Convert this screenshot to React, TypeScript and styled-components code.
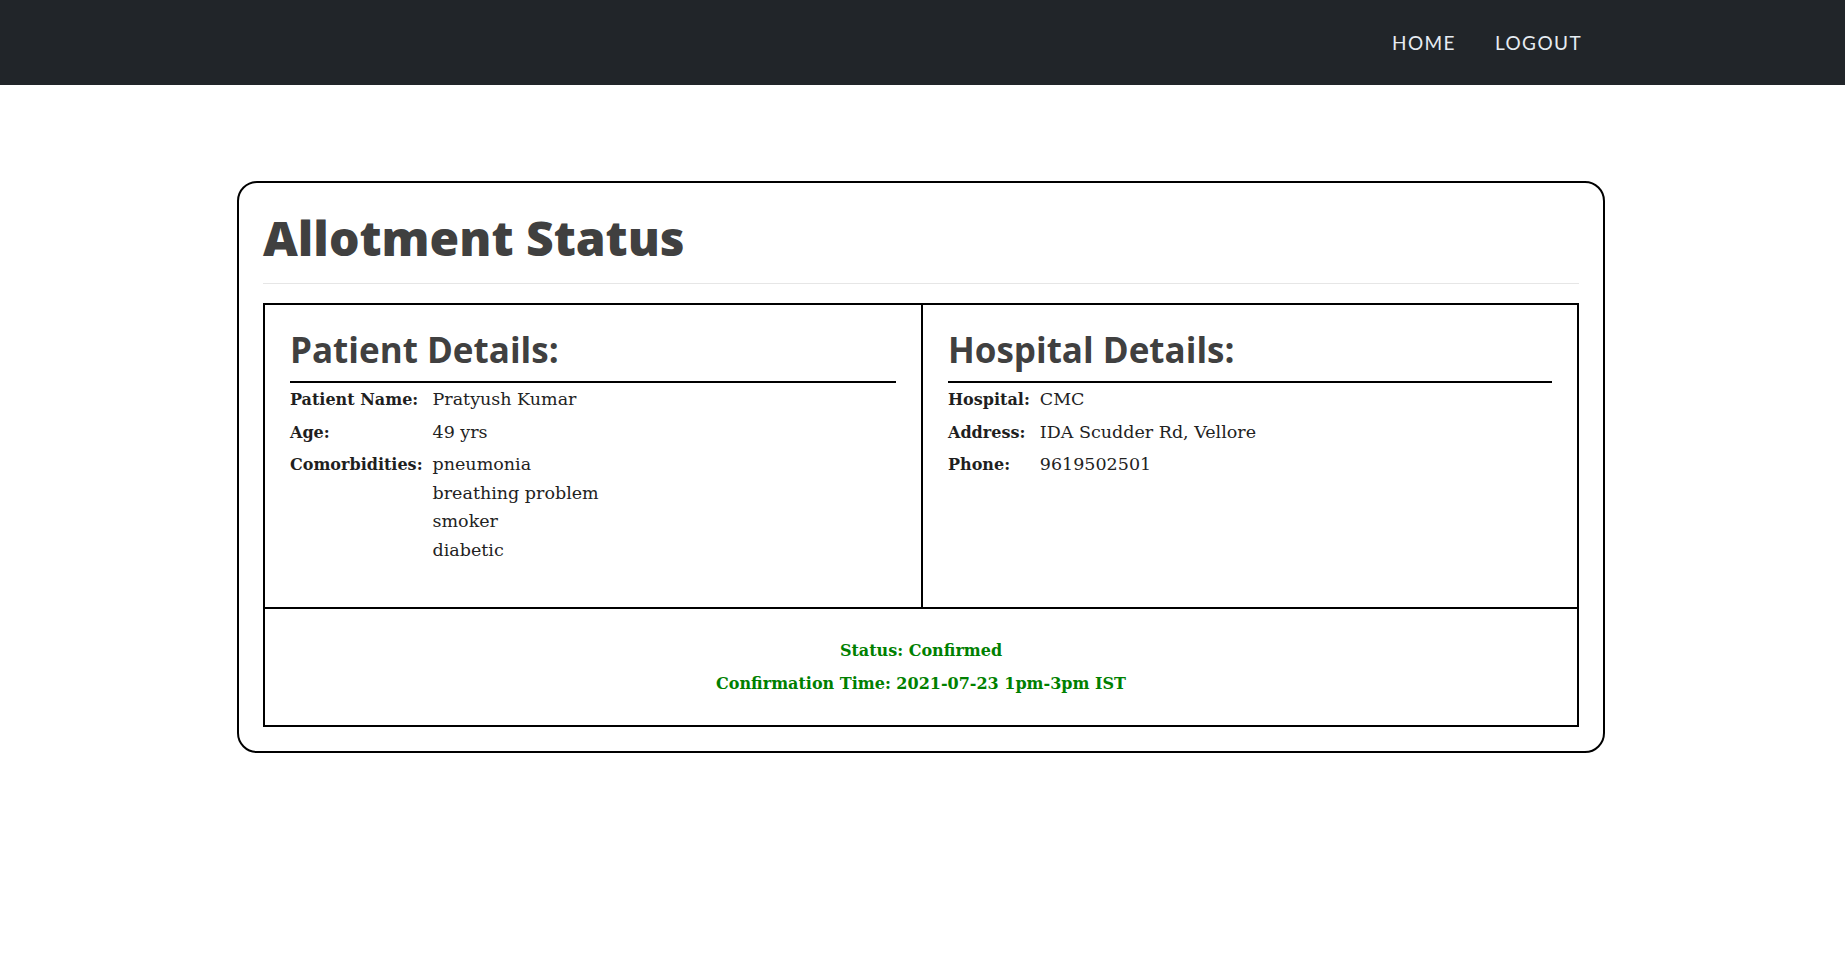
import React from "react";
import styled, { createGlobalStyle } from "styled-components";

const GlobalStyle = createGlobalStyle`
    body {
        margin: 0;
        background: #ffffff;
        font-family: "DejaVu Serif", serif;
    }
`;

const patient = [
    { label: "Patient Name:", values: ["Pratyush Kumar"] },
    { label: "Age:", values: ["49 yrs"] },
    { label: "Comorbidities:", values: ["pneumonia", "breathing problem", "smoker", "diabetic"] },
];

const hospital = [
    { label: "Hospital:", values: ["CMC"] },
    { label: "Address:", values: ["IDA Scudder Rd, Vellore"] },
    { label: "Phone:", values: ["9619502501"] },
];

type Row = { label: string; values: string[] };

const DetailsBlock = ({ title, rows }: { title: string; rows: Row[] }) => (
    <Cell>
        <CellTitle>{title}</CellTitle>
        <Details>
            {rows.map((r) => (
                <React.Fragment key={r.label}>
                    <Label>{r.label}</Label>
                    <Values>
                        {r.values.map((v) => (
                            <span key={v}>{v}</span>
                        ))}
                    </Values>
                </React.Fragment>
            ))}
        </Details>
    </Cell>
);

export default function App() {
    return (
        <>
            <GlobalStyle />
            <Navbar>
                <NavLinks>
                    <NavLink href="#">HOME</NavLink>
                    <NavLink href="#">LOGOUT</NavLink>
                </NavLinks>
            </Navbar>
            <Main>
                <Card>
                    <Title>Allotment Status</Title>
                    <Rule />
                    <StatusTable>
                        <DetailsBlock title="Patient Details:" rows={patient} />
                        <DetailsBlock title="Hospital Details:" rows={hospital} />
                        <Footer>
                            <StatusLine>Status: Confirmed</StatusLine>
                            <StatusLine>Confirmation Time: 2021-07-23 1pm-3pm IST</StatusLine>
                        </Footer>
                    </StatusTable>
                </Card>
            </Main>
        </>
    );
}

const Navbar = styled.nav`
    height: 85px;
    background: #212529;
    display: flex;
    align-items: center;
    justify-content: flex-end;
    padding-right: 263px;
`;
const NavLinks = styled.div`
    display: flex;
    gap: 39px;
`;
const NavLink = styled.a`
    font-family: "Lato", "Open Sans", sans-serif;
    font-size: 19px;
    letter-spacing: 1.4px;
    color: #e6ecf2;
    text-decoration: none;
`;
const Main = styled.main`
    padding: 96px 3px 0 0;
    display: flex;
    justify-content: center;
`;
const Card = styled.section`
    width: 1368px;
    box-sizing: border-box;
    border: 2px solid #000;
    border-radius: 20px;
    padding: 22px 24px 24px;
`;
const Title = styled.h1`
    margin: 0;
    font-family: "Open Sans", sans-serif;
    font-weight: 800;
    font-size: 48px;
    line-height: 66px;
    color: #404040;
    letter-spacing: 0;
`;
const Rule = styled.hr`
    margin: 12px 0 19px;
    border: 0;
    border-top: 1px solid #e6e6e6;
`;
const StatusTable = styled.div`
    border: 2px solid #000;
    display: grid;
    grid-template-columns: 1fr 1fr;
`;
const Cell = styled.div`
    padding: 22px 25px 30px;
    height: 302px;
    box-sizing: border-box;
    & + & {
        border-left: 2px solid #000;
    }
`;
const CellTitle = styled.h2`
    margin: 0;
    font-family: "Open Sans", sans-serif;
    font-weight: 700;
    font-size: 35px;
    line-height: 46px;
    color: #404040;
    padding-bottom: 8px;
    border-bottom: 2px solid #000;
`;
const Details = styled.div`
    display: grid;
    grid-template-columns: auto 1fr;
    align-items: baseline;
    column-gap: 10px;
    row-gap: 3px;
    margin-top: 2px;
    font-size: 17.5px;
    line-height: 28.5px;
    color: #222;
`;
const Label = styled.span`
    font-weight: 700;
    font-size: 16px;
    color: #1f1f1f;
`;
const Values = styled.div`
    display: flex;
    flex-direction: column;
`;
const Footer = styled.div`
    grid-column: 1 / -1;
    border-top: 2px solid #000;
    padding: 28px 0 27px;
    text-align: center;
    display: flex;
    flex-direction: column;
    gap: 5px;
`;
const StatusLine = styled.span`
    color: #008000;
    font-weight: 700;
    font-size: 16px;
    line-height: 28px;
`;
